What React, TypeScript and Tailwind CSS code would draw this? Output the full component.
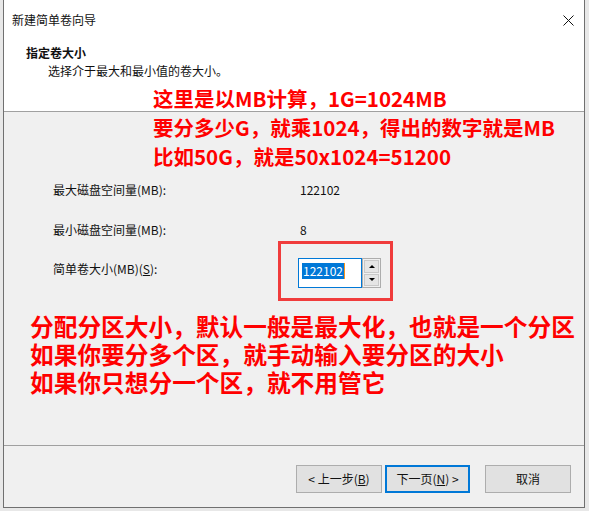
import React from "react";

const font = "font-['Noto_Sans_CJK_SC','Noto_Sans',sans-serif]";

const SpinBox = () => (
  <div className="flex">
    <div className="w-[64px] h-[30px] border border-[#0078d7] bg-white flex items-start pl-[3px] pt-[4px]">
      <span className="bg-[#0078d7] text-white text-[12px] leading-[16px] px-px">122102</span>
      <span className="w-px h-[16px] bg-[#f7941d]" />
    </div>
    <div className="w-[19px] h-[30px] border border-[#adadad] bg-[#f0f0f0] flex flex-col p-px gap-px">
      <div className="flex-1 bg-[#e5e5e5] border border-[#c9c9c9] flex items-center justify-center">
        <div className="w-0 h-0 border-x-[3px] border-x-transparent border-b-[3px] border-b-black" />
      </div>
      <div className="flex-1 bg-[#e5e5e5] border border-[#c9c9c9] flex items-center justify-center">
        <div className="w-0 h-0 border-x-[3px] border-x-transparent border-t-[3px] border-t-black" />
      </div>
    </div>
  </div>
);

const Button = ({ children, primary }: { children: React.ReactNode; primary?: boolean }) => (
  <div
    className={
      primary
        ? "w-[85px] h-[28px] border-2 border-[#0078d7] bg-[#e1e1e1] flex items-center justify-center text-[12px]"
        : "w-[86px] h-[28px] border border-[#adadad] bg-[#e1e1e1] flex items-center justify-center text-[12px]"
    }
  >
    {children}
  </div>
);

export default function App() {
  return (
    <div className={`relative w-[589px] h-[511px] bg-[#e8e8e8] overflow-hidden text-[#111] ${font}`}>
      <div className="ml-[3px] w-[582px] h-[508px] border-x border-b border-[#707070] bg-[#f0f0f0] flex flex-col">
        {/* title bar */}
        <div className="h-[40px] bg-white flex items-center justify-between pl-[8px] pr-[10px]">
          <span className="text-[12px]">新建简单卷向导</span>
          <svg width="11" height="11" viewBox="0 0 11 11">
            <path d="M0.5 0.5 L10.5 10.5 M10.5 0.5 L0.5 10.5" stroke="#111" strokeWidth="1" />
          </svg>
        </div>

        {/* header */}
        <div className="h-[71px] bg-white pl-[22px] pt-[4px] text-[12px] leading-[18px]">
          <div className="font-bold">指定卷大小</div>
          <div className="pl-[22px]">选择介于最大和最小值的卷大小。</div>
        </div>
        <div className="h-px bg-[#a0a0a0]" />

        {/* body */}
        <div className="flex-1 pl-[49px] pt-[69px] text-[12px] leading-[18px]">
          <div className="flex">
            <span className="w-[247px]">最大磁盘空间量(MB):</span>
            <span>122102</span>
          </div>
          <div className="flex mt-[22px]">
            <span className="w-[247px]">最小磁盘空间量(MB):</span>
            <span>8</span>
          </div>
          <div className="flex mt-[19px]">
            <span className="w-[245px] mt-[2px]">
              简单卷大小(MB)(<span className="underline">S</span>):
            </span>
            <SpinBox />
          </div>
        </div>
        <div className="h-px bg-[#a0a0a0]" />

        {/* footer */}
        <div className="h-[61px] flex items-start justify-end pt-[19px] pr-[13px]">
          <Button>
            &lt; 上一步(<span className="underline">B</span>)
          </Button>
          <div className="ml-[3px]">
            <Button primary>
              下一页(<span className="underline">N</span>) &gt;
            </Button>
          </div>
          <div className="ml-[15px]">
            <Button>取消</Button>
          </div>
        </div>
      </div>

      {/* annotations */}
      <div className="absolute left-[153px] top-[84px] text-[20.5px] leading-[29px] font-bold text-[#ff0000] whitespace-nowrap">
        <div>这里是以MB计算，1G=1024MB</div>
        <div>要分多少G，就乘1024，得出的数字就是MB</div>
        <div>比如50G，就是50x1024=51200</div>
      </div>
      <div className="absolute left-[278px] top-[241px] w-[115px] h-[60px] border-[3px] border-[#f03c3c]" />
      <div className="absolute left-[30px] top-[312px] text-[23.7px] leading-[28px] font-bold text-[#ff0000] whitespace-nowrap">
        <div>分配分区大小，默认一般是最大化，也就是一个分区</div>
        <div>如果你要分多个区，就手动输入要分区的大小</div>
        <div>如果你只想分一个区，就不用管它</div>
      </div>
    </div>
  );
}
